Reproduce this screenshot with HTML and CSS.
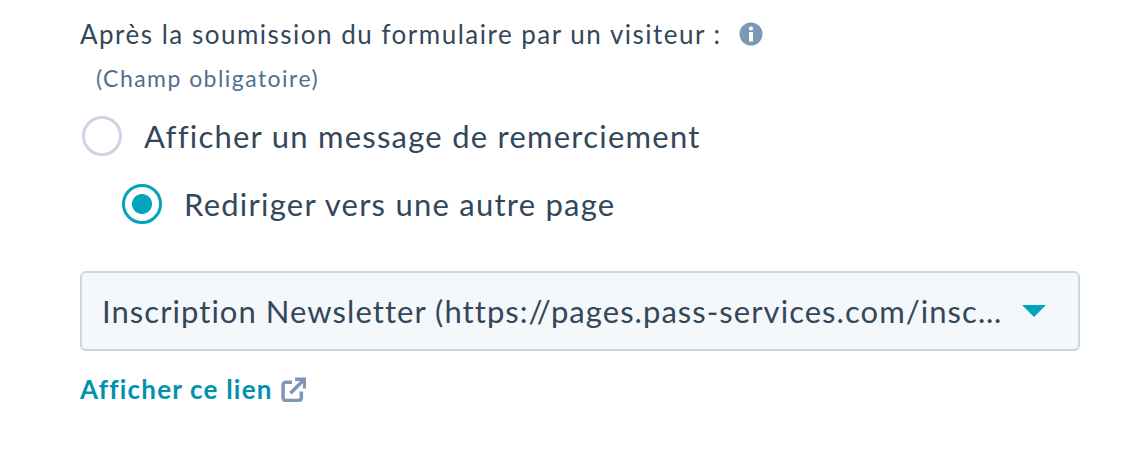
FILE: index.html
```html
<!DOCTYPE html>
<html lang="fr">
<head>
  <meta charset="UTF-8" />
  <title>Après la soumission</title>
  <link rel="stylesheet" href="styles.css">
</head>
<body>
  <div class="container">
    <div class="field-label">
      <span>Après la soumission du formulaire par un visiteur :</span>
      <svg class="info-icon" viewBox="0 0 24 24" width="24" height="24">
        <circle cx="12" cy="12" r="11.500" fill="#7c98b6"/>
        <circle cx="12" cy="6.500" r="2.100" fill="#fff"/>
        <rect x="10" y="10" width="4" height="9.500" fill="#fff"/>
      </svg>
    </div>
    <div class="required">(Champ obligatoire)</div>

    <div class="radio-row">
      <span class="radio"></span>
      <span>Afficher un message de remerciement</span>
    </div>
    <div class="radio-row nested">
      <span class="radio checked"></span>
      <span>Rediriger vers une autre page</span>
    </div>

    <div class="select-box">
      <span class="select-text">Inscription Newsletter (https://pages.pass-services.com/insc…</span>
      <span class="caret"></span>
    </div>

    <a class="view-link" href="#">
      <span>Afficher ce lien</span>
      <svg viewBox="0 0 24 24" width="25" height="25" fill="none" stroke="#7c98b6" stroke-width="3.400">
        <path d="M10.500 5H4.500A2.500 2.500 0 0 0 2 7.500V20a2.500 2.500 0 0 0 2.500 2.500H17a2.500 2.500 0 0 0 2.500-2.500v-6"/>
        <path d="M9 15.500 21 3.500"/>
        <path d="M13.500 2.200h9.300V11"/>
      </svg>
    </a>
  </div>
</body>
</html>
```

FILE: styles.css
```css
* {
  box-sizing: border-box;
}

body {
  margin: 0;
  font-family: "Lato", "Noto Sans", sans-serif;
  color: #33475b;
  background: #fff;
}

.container {
  width: 1000px;
  margin-left: 80px;
  padding-top: 18px;
}

.field-label {
  display: flex;
  align-items: center;
  gap: 18px;
  height: 32px;
  font-size: 26px;
  letter-spacing: 1.5px;
}

.info-icon {
  flex: none;
  margin-left: -1px;
  margin-top: -1px;
}

.required {
  margin-top: 13px;
  margin-left: 16px;
  font-size: 23px;
  line-height: 30px;
  letter-spacing: 1.45px;
  color: #516f90;
}

.radio-row {
  display: flex;
  align-items: center;
  gap: 22px;
  height: 40px;
  margin-top: 23px;
  margin-left: 2px;
  font-size: 31px;
  letter-spacing: 1.24px;
}

.radio-row.nested {
  margin-top: 28px;
  margin-left: 42px;
}

.radio {
  width: 40px;
  height: 40px;
  flex: none;
  border: 3px solid #cbd6e2;
  border-radius: 50%;
  background: #fff;
}

.radio.checked {
  border-color: #00a4bd;
  background: radial-gradient(circle, #00a4bd 0, #00a4bd 9.500px, #fff 10.500px);
}

.select-box {
  display: flex;
  align-items: center;
  justify-content: space-between;
  height: 80px;
  margin-top: 47px;
  padding: 0 32px 0 20px;
  background: #f5f8fa;
  border: 2px solid #cbd6e2;
  border-radius: 6px;
  font-size: 31px;
  letter-spacing: 1.05px;
}

.select-text {
  white-space: nowrap;
}

.caret {
  flex: none;
  width: 0;
  height: 0;
  border-left: 12px solid transparent;
  border-right: 12px solid transparent;
  border-top: 12px solid #00a4bd;
}

.view-link {
  display: inline-flex;
  align-items: center;
  gap: 8px;
  margin-top: 22px;
  font-size: 26px;
  font-weight: 700;
  letter-spacing: 1.2px;
  color: #0091ae;
  text-decoration: none;
}
```
